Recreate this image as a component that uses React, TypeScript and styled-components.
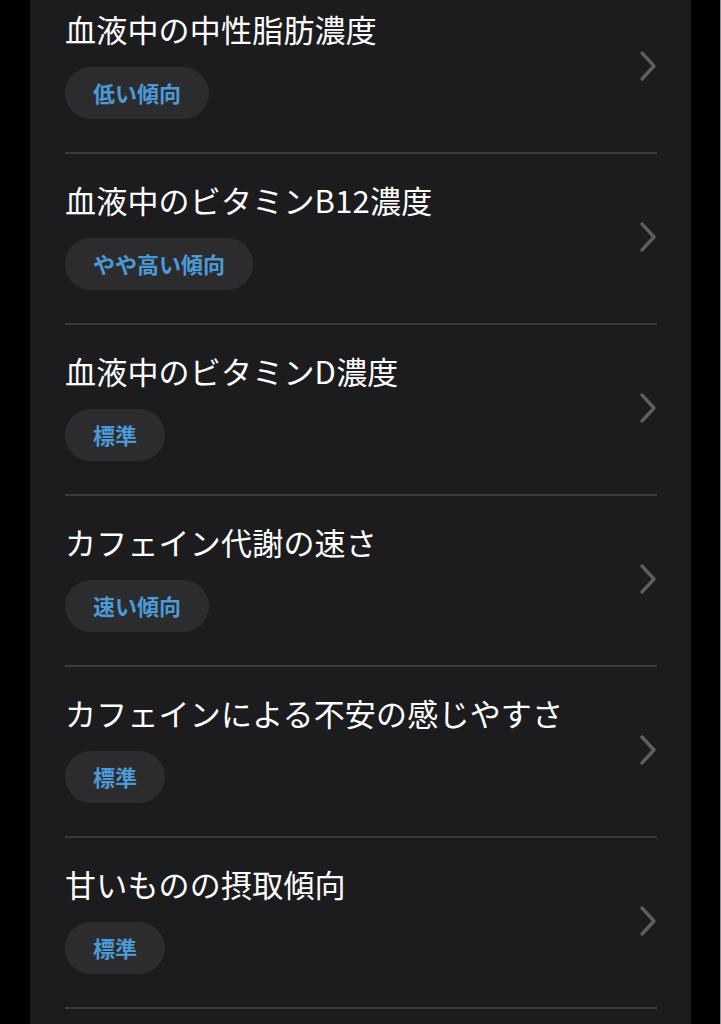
import styled, { createGlobalStyle } from 'styled-components';

const Global = createGlobalStyle`
  html, body {
    margin: 0;
    padding: 0;
    background: #000;
  }
  body {
    font-family: "Noto Sans CJK JP", "Noto Sans", sans-serif;
  }
`;

const Screen = styled.div`
  display: flex;
  width: 721px;
  height: 1024px;
  overflow: hidden;
  background: #000;
  border-right: 1px solid #8e8e93;
  box-sizing: border-box;
`;

const Panel = styled.main`
  margin-left: 30px;
  width: 661px;
  background: #1c1c1e;
  padding: 0 34px 0 35px;
  box-sizing: border-box;
`;

const List = styled.ul`
  list-style: none;
  margin: 0;
  padding: 0;
`;

const Row = styled.li`
  display: flex;
  align-items: center;
  padding: 27px 0 33px;
  border-bottom: 2px solid #3a3a3c;

  &:first-child {
    padding-top: 10px;
  }
`;

const Body = styled.div`
  flex: 1;
  display: flex;
  flex-direction: column;
  align-items: flex-start;
  gap: 19px;
`;

const Title = styled.h3`
  margin: 0;
  font-size: 31px;
  line-height: 38px;
  font-weight: 400;
  color: #fff;
  letter-spacing: 0.2px;
`;

const Badge = styled.span`
  display: inline-flex;
  align-items: center;
  box-sizing: border-box;
  height: 52px;
  padding: 0 28px 3px;
  border-radius: 26px;
  background: #2c2c2e;
  color: #4b9ad6;
  font-size: 22px;
  font-weight: 700;
`;

const Chevron = styled.svg`
  flex: none;
  width: 20px;
  height: 32px;
  margin: 3px -1px 0 0;
`;

const items = [
  { title: '血液中の中性脂肪濃度', tag: '低い傾向' },
  { title: '血液中のビタミンB12濃度', tag: 'やや高い傾向' },
  { title: '血液中のビタミンD濃度', tag: '標準' },
  { title: 'カフェイン代謝の速さ', tag: '速い傾向' },
  { title: 'カフェインによる不安の感じやすさ', tag: '標準' },
  { title: '甘いものの摂取傾向', tag: '標準' },
];

export default function App() {
  return (
    <>
      <Global />
      <Screen>
        <Panel>
          <List>
            {items.map((it) => (
              <Row key={it.title}>
                <Body>
                  <Title>{it.title}</Title>
                  <Badge>{it.tag}</Badge>
                </Body>
                <Chevron viewBox="0 0 20 32">
                  <path d="M4 3 L16 16 L4 29" fill="none" stroke="#5e5e62" strokeWidth="3.4" strokeLinecap="round" strokeLinejoin="round" />
                </Chevron>
              </Row>
            ))}
          </List>
        </Panel>
      </Screen>
    </>
  );
}
